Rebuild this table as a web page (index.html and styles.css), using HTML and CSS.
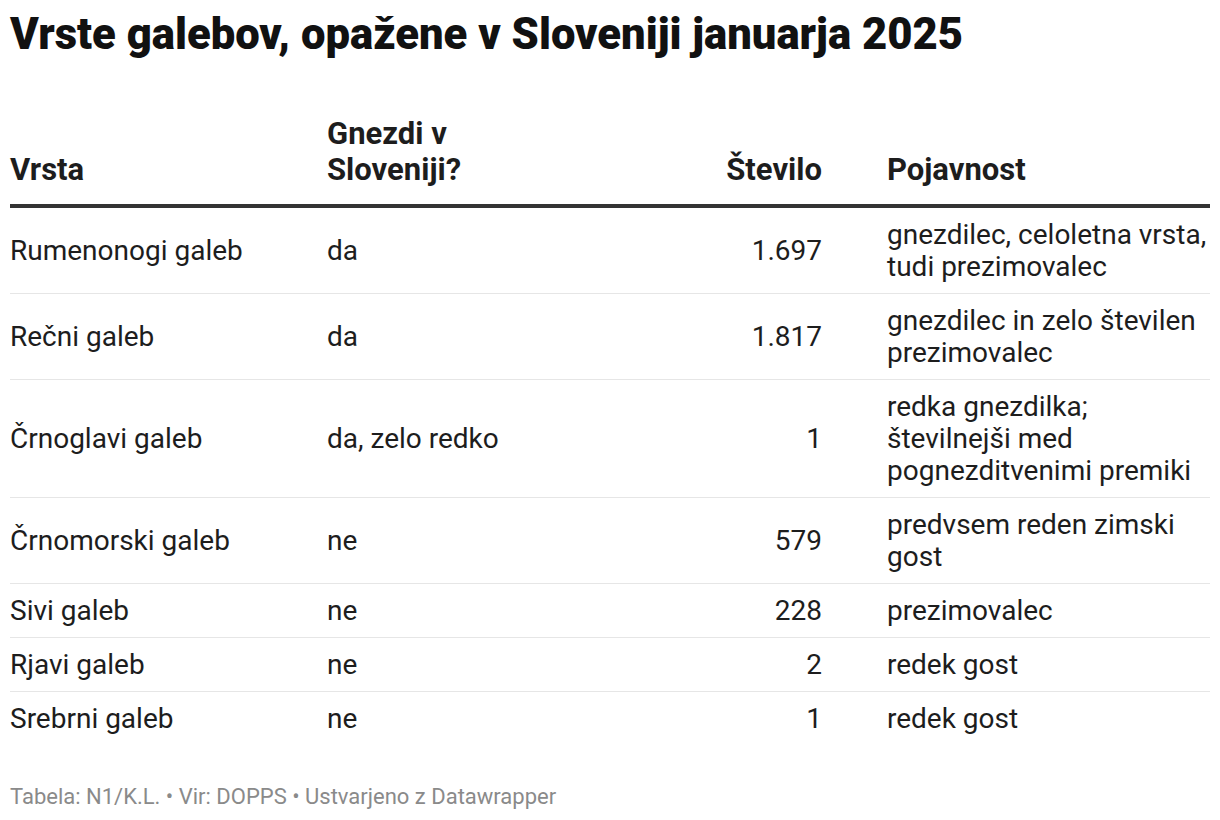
FILE: index.html
```html
<!DOCTYPE html>
<html lang="sl">
<head>
<meta charset="utf-8">
<title>Vrste galebov</title>
<link rel="stylesheet" href="styles.css">
</head>
<body>
<div class="chart">
  <h1 class="title">Vrste galebov, opažene v Sloveniji januarja 2025</h1>
  <table class="gulls">
    <colgroup>
      <col class="c-species">
      <col class="c-nest">
      <col class="c-count">
      <col class="c-occ">
    </colgroup>
    <thead>
      <tr>
        <th>Vrsta</th>
        <th>Gnezdi v<br>Sloveniji?</th>
        <th class="num">Število</th>
        <th>Pojavnost</th>
      </tr>
    </thead>
    <tbody>
      <tr><td>Rumenonogi galeb</td><td>da</td><td class="num">1.697</td><td>gnezdilec, celoletna vrsta, tudi prezimovalec</td></tr>
      <tr><td>Rečni galeb</td><td>da</td><td class="num">1.817</td><td>gnezdilec in zelo številen prezimovalec</td></tr>
      <tr><td>Črnoglavi galeb</td><td>da, zelo redko</td><td class="num">1</td><td>redka gnezdilka; številnejši med pognezditvenimi premiki</td></tr>
      <tr><td>Črnomorski galeb</td><td>ne</td><td class="num">579</td><td>predvsem reden zimski gost</td></tr>
      <tr><td>Sivi galeb</td><td>ne</td><td class="num">228</td><td>prezimovalec</td></tr>
      <tr><td>Rjavi galeb</td><td>ne</td><td class="num">2</td><td>redek gost</td></tr>
      <tr><td>Srebrni galeb</td><td>ne</td><td class="num">1</td><td>redek gost</td></tr>
    </tbody>
  </table>
  <p class="footer">Tabela: N1/K.L. • Vir: DOPPS • Ustvarjeno z Datawrapper</p>
</div>
</body>
</html>
```
FILE: styles.css
```css
html, body {
  margin: 0;
  padding: 0;
  background: #ffffff;
}
body {
  padding: 10px;
  font-family: Roboto, "Liberation Sans", Arial, sans-serif;
  color: #1d1d1d;
}
.chart {
  width: 1200px;
}
.title {
  margin: 0;
  font-size: 43.6px;
  line-height: 50px;
  font-weight: 900;
  color: #111111;
}
.gulls {
  margin-top: 56px;
  width: 1200px;
  border-collapse: collapse;
  table-layout: fixed;
}
.c-species { width: 317px; }
.c-nest { width: 370px; }
.c-count { width: 190px; }
.c-occ { width: 323px; }
.gulls th {
  font-size: 31px;
  line-height: 36px;
  font-weight: 700;
  text-align: left;
  vertical-align: bottom;
  padding: 0 0 16px 0;
  border-bottom: 4px solid #333333;
}
.gulls td {
  font-size: 28px;
  line-height: 32px;
  font-weight: 400;
  text-align: left;
  vertical-align: middle;
  padding: 10.5px 0;
  border-bottom: 1px solid #e6e6e6;
}
.gulls tbody tr:last-child td {
  border-bottom: none;
}
.gulls .num {
  text-align: right;
  padding-right: 65px;
}
.footer {
  margin: 40px 0 0 0;
  font-size: 22px;
  line-height: 24px;
  color: #8a8a8a;
}
```
